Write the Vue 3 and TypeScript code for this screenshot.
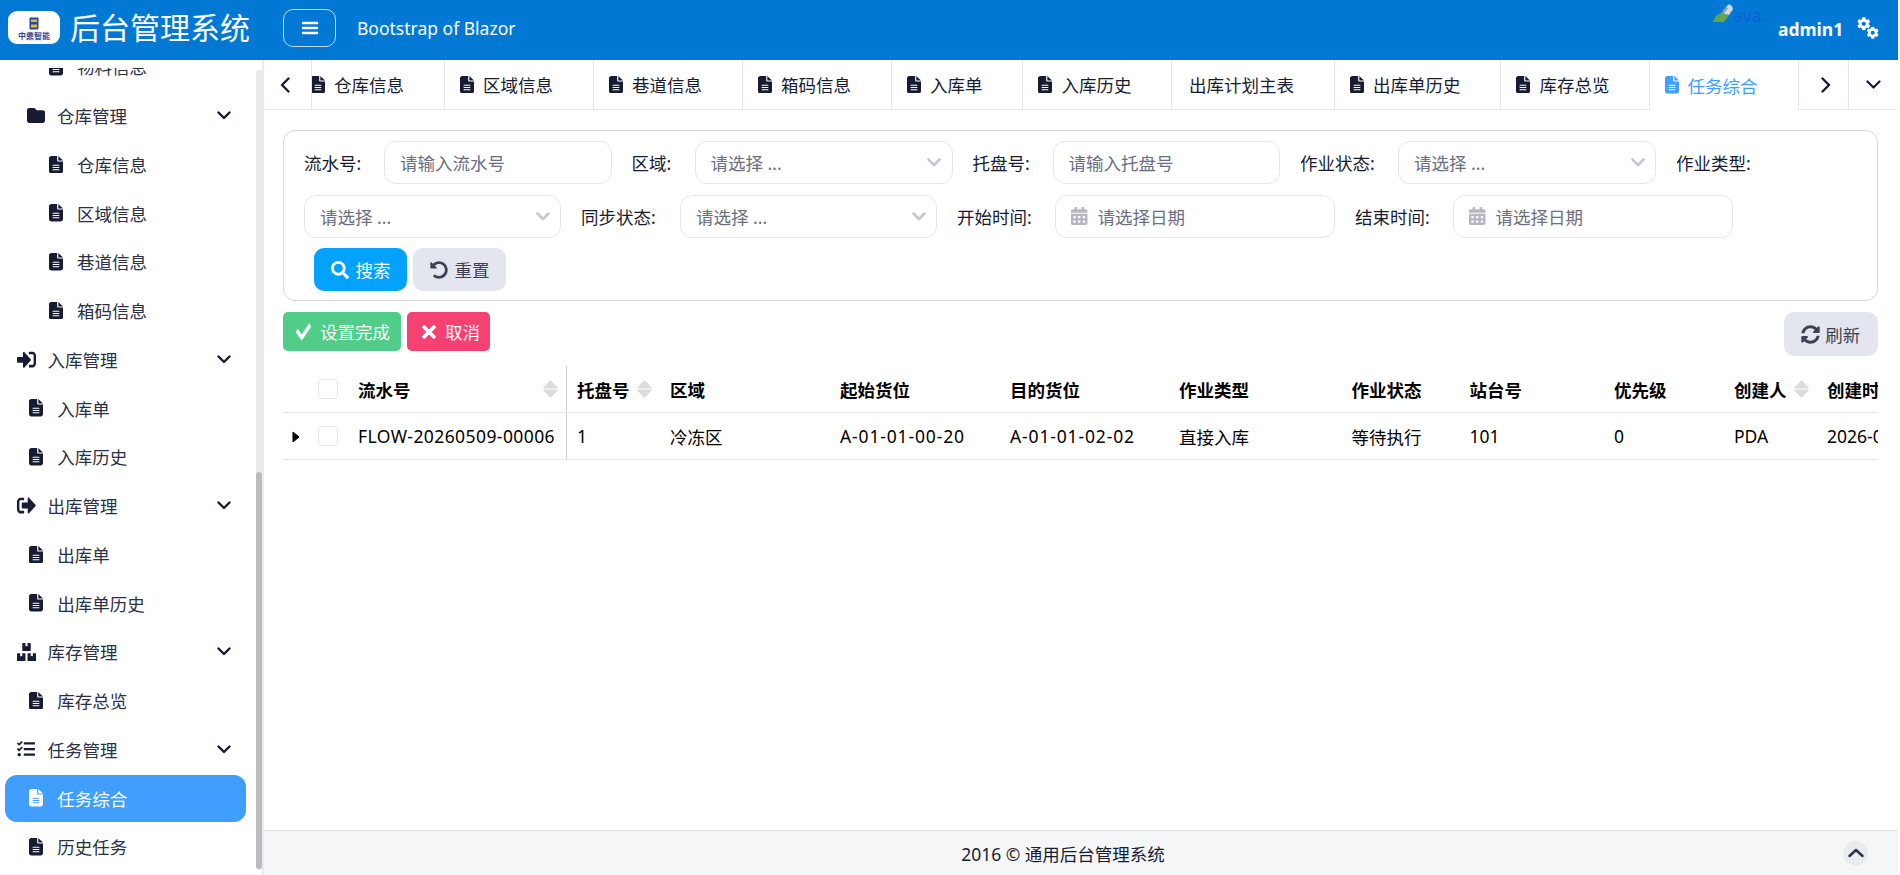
<script setup lang="ts">
import { h } from 'vue'

const icons: Record<string, [string, string]> = {
  file: ['0 0 384 512', 'M64 0C28.7 0 0 28.7 0 64V448c0 35.3 28.7 64 64 64H320c35.3 0 64-28.7 64-64V160H256c-17.7 0-32-14.3-32-32V0H64zM256 0V128H384L256 0zM112 256H272c8.8 0 16 7.2 16 16s-7.2 16-16 16H112c-8.8 0-16-7.2-16-16s7.2-16 16-16zm0 64H272c8.8 0 16 7.2 16 16s-7.2 16-16 16H112c-8.8 0-16-7.2-16-16s7.2-16 16-16zm0 64H272c8.8 0 16 7.2 16 16s-7.2 16-16 16H112c-8.8 0-16-7.2-16-16s7.2-16 16-16z'],
  folder: ['0 0 512 512', 'M64 480H448c35.3 0 64-28.7 64-64V160c0-35.3-28.7-64-64-64H288c-10.1 0-19.6-4.7-25.6-12.8L243.2 57.6C231.1 41.5 212.1 32 192 32H64C28.7 32 0 60.7 0 96V416c0 35.3 28.7 64 64 64z'],
  signIn: ['0 0 512 512', 'M416 448h-84c-6.6 0-12-5.4-12-12v-40c0-6.6 5.4-12 12-12h84c17.7 0 32-14.3 32-32V160c0-17.7-14.3-32-32-32h-84c-6.6 0-12-5.4-12-12V76c0-6.6 5.4-12 12-12h84c53 0 96 43 96 96v192c0 53-43 96-96 96zm-47-201L201 79c-15-15-41-4.5-41 17v96H24c-13.3 0-24 10.7-24 24v96c0 13.3 10.7 24 24 24h136v96c0 21.5 26 32 41 17l168-168c9.3-9.4 9.3-24.6 0-34z'],
  signOut: ['0 0 512 512', 'M497 273L329 441c-15 15-41 4.5-41-17v-96H152c-13.3 0-24-10.7-24-24v-96c0-13.3 10.7-24 24-24h136V88c0-21.4 25.9-32 41-17l168 168c9.3 9.4 9.3 24.6 0 34zM192 436v-40c0-6.6-5.4-12-12-12H96c-17.7 0-32-14.3-32-32V160c0-17.7 14.3-32 32-32h84c6.6 0 12-5.4 12-12V76c0-6.6-5.4-12-12-12H96c-53 0-96 43-96 96v192c0 53 43 96 96 96h84c6.6 0 12-5.4 12-12z'],
  boxes: ['0 0 576 512', 'M560 288h-80v96l-32-21.3-32 21.3v-96h-80c-8.8 0-16 7.2-16 16v192c0 8.8 7.2 16 16 16h224c8.8 0 16-7.2 16-16V304c0-8.8-7.2-16-16-16zm-384-64h224c8.8 0 16-7.2 16-16V16c0-8.8-7.2-16-16-16h-80v96l-32-21.3L256 96V0h-80c-8.8 0-16 7.2-16 16v192c0 8.8 7.2 16 16 16zm64 64h-80v96l-32-21.3L96 384v-96H16c-8.8 0-16 7.2-16 16v192c0 8.8 7.2 16 16 16h224c8.8 0 16-7.2 16-16V304c0-8.8-7.2-16-16-16z'],
  tasks: ['0 0 512 512', 'M139.61 35.5a12 12 0 0 0-17 0L58.93 98.81l-22.7-22.12a12 12 0 0 0-17 0L3.53 92.41a12 12 0 0 0 0 17l47.59 47.4a12.78 12.78 0 0 0 17.61 0l15.59-15.62L156.52 69a12.09 12.09 0 0 0 .09-17zm0 159.19a12 12 0 0 0-17 0l-63.68 63.72-22.7-22.1a12 12 0 0 0-17 0L3.53 252a12 12 0 0 0 0 17L51 316.5a12.77 12.77 0 0 0 17.6 0l15.7-15.69 72.2-72.22a12 12 0 0 0 .09-16.9zM64 368c-26.49 0-48.59 21.5-48.59 48S37.53 464 64 464a48 48 0 0 0 0-96zm432 16H208a16 16 0 0 0-16 16v32a16 16 0 0 0 16 16h288a16 16 0 0 0 16-16v-32a16 16 0 0 0-16-16zm0-320H208a16 16 0 0 0-16 16v32a16 16 0 0 0 16 16h288a16 16 0 0 0 16-16V80a16 16 0 0 0-16-16zm0 160H208a16 16 0 0 0-16 16v32a16 16 0 0 0 16 16h288a16 16 0 0 0 16-16v-32a16 16 0 0 0-16-16z'],
  search: ['0 0 512 512', 'M505 442.7L405.3 343c-4.5-4.5-10.6-7-17-7H372c27.6-35.3 44-79.7 44-128C416 93.1 322.9 0 208 0S0 93.1 0 208s93.1 208 208 208c48.3 0 92.7-16.4 128-44v16.3c0 6.4 2.5 12.5 7 17l99.7 99.7c9.4 9.4 24.6 9.4 33.9 0l28.3-28.3c9.4-9.4 9.4-24.6.1-34zM208 336c-70.7 0-128-57.2-128-128 0-70.7 57.2-128 128-128 70.7 0 128 57.2 128 128 0 70.7-57.2 128-128 128z'],
  undo: ['0 0 512 512', 'M255.545 8c-66.269.119-126.438 26.233-170.86 68.685L48.971 40.971C33.851 25.851 8 36.559 8 57.941V192c0 13.255 10.745 24 24 24h134.059c21.382 0 32.09-25.851 16.971-40.971l-41.75-41.75c30.864-28.899 70.801-44.907 113.23-45.273 92.398-.798 170.283 73.977 169.484 169.442C423.236 348.009 349.816 424 256 424c-41.127 0-79.997-14.678-110.63-41.556-4.743-4.161-11.906-3.908-16.368.553L89.34 422.659c-4.872 4.872-4.631 12.815.482 17.433C133.798 479.813 192.074 504 256 504c136.966 0 247.999-111.033 248-247.998C504.001 119.193 392.354 7.755 255.545 8z'],
  check: ['0 0 512 512', 'M173.898 439.404l-166.4-166.4c-9.997-9.997-9.997-26.206 0-36.204l36.203-36.204c9.997-9.998 26.207-9.998 36.204 0L192 312.69 432.095 72.596c9.997-9.997 26.207-9.997 36.204 0l36.203 36.204c9.997 9.997 9.997 26.206 0 36.204l-294.4 294.401c-9.998 9.997-26.207 9.997-36.204-.001z'],
  times: ['0 0 352 512', 'M242.72 256l100.07-100.07c12.28-12.28 12.28-32.19 0-44.48l-22.24-22.24c-12.28-12.28-32.19-12.28-44.48 0L176 189.28 75.93 89.21c-12.28-12.28-32.19-12.28-44.48 0L9.21 111.45c-12.28 12.28-12.28 32.19 0 44.48L109.28 256 9.21 356.07c-12.28 12.28-12.28 32.19 0 44.48l22.24 22.24c12.28 12.28 32.2 12.28 44.48 0L176 322.72l100.07 100.07c12.28 12.28 32.2 12.28 44.48 0l22.24-22.24c12.28-12.28 12.28-32.19 0-44.48L242.72 256z'],
  sync: ['0 0 512 512', 'M370.72 133.28C339.458 104.008 298.888 87.962 255.848 88c-77.458.068-144.328 53.178-162.791 126.85-1.344 5.363-6.122 9.15-11.651 9.15H24.103c-7.498 0-13.194-6.807-11.807-14.176C33.933 94.924 134.813 8 256 8c66.448 0 126.791 26.136 171.315 68.685L463.03 40.97C478.149 25.851 504 36.559 504 57.941V192c0 13.255-10.745 24-24 24H345.941c-21.382 0-32.09-25.851-16.971-40.971l41.75-41.749zM32 296h134.059c21.382 0 32.09 25.851 16.971 40.971l-41.75 41.75c31.262 29.273 71.835 45.319 114.876 45.28 77.418-.07 144.315-53.144 162.787-126.849 1.344-5.363 6.122-9.15 11.651-9.15h57.304c7.498 0 13.194 6.807 11.807 14.176C478.067 417.076 377.187 504 256 504c-66.448 0-126.791-26.136-171.315-68.685L48.97 471.03C33.851 486.149 8 475.441 8 454.059V320c0-13.255 10.745-24 24-24z'],
  calendar: ['0 0 448 512', 'M0 464c0 26.5 21.5 48 48 48h352c26.5 0 48-21.5 48-48V192H0v272zm320-196c0-6.6 5.4-12 12-12h40c6.6 0 12 5.4 12 12v40c0 6.6-5.4 12-12 12h-40c-6.6 0-12-5.4-12-12v-40zm0 128c0-6.6 5.4-12 12-12h40c6.6 0 12 5.4 12 12v40c0 6.6-5.4 12-12 12h-40c-6.6 0-12-5.4-12-12v-40zM192 268c0-6.6 5.4-12 12-12h40c6.6 0 12 5.4 12 12v40c0 6.6-5.4 12-12 12h-40c-6.6 0-12-5.4-12-12v-40zm0 128c0-6.6 5.4-12 12-12h40c6.6 0 12 5.4 12 12v40c0 6.6-5.4 12-12 12h-40c-6.6 0-12-5.4-12-12v-40zM64 268c0-6.6 5.4-12 12-12h40c6.6 0 12 5.4 12 12v40c0 6.6-5.4 12-12 12H76c-6.6 0-12-5.4-12-12v-40zm0 128c0-6.6 5.4-12 12-12h40c6.6 0 12 5.4 12 12v40c0 6.6-5.4 12-12 12H76c-6.6 0-12-5.4-12-12v-40zM400 64h-48V16c0-8.8-7.2-16-16-16h-32c-8.8 0-16 7.2-16 16v48H160V16c0-8.8-7.2-16-16-16h-32c-8.8 0-16 7.2-16 16v48H48C21.5 64 0 85.5 0 112v48h448v-48c0-26.5-21.5-48-48-48z'],
  cog: ['0 0 512 512', 'M487.4 315.7l-42.6-24.6c4.3-23.2 4.3-47 0-70.2l42.6-24.6c4.9-2.8 7.1-8.6 5.5-14-11.1-35.6-30-67.8-54.7-94.6-3.8-4.1-10-5.1-14.8-2.3L380.8 110c-17.9-15.4-38.5-27.3-60.8-35.1V25.8c0-5.6-3.9-10.5-9.4-11.7-36.7-8.2-74.3-7.8-109.2 0-5.5 1.2-9.4 6.1-9.4 11.7V75c-22.2 7.9-42.8 19.8-60.8 35.1L88.7 85.5c-4.9-2.8-11-1.9-14.8 2.3-24.7 26.7-43.6 58.9-54.7 94.6-1.7 5.4.6 11.2 5.5 14L67.3 221c-4.3 23.2-4.3 47 0 70.2l-42.6 24.6c-4.9 2.8-7.1 8.6-5.5 14 11.1 35.6 30 67.8 54.7 94.6 3.8 4.1 10 5.1 14.8 2.3l42.6-24.6c17.9 15.4 38.5 27.3 60.8 35.1v49.2c0 5.6 3.9 10.5 9.4 11.7 36.7 8.2 74.3 7.8 109.2 0 5.5-1.2 9.4-6.1 9.4-11.7v-49.2c22.2-7.9 42.8-19.8 60.8-35.1l42.6 24.6c4.9 2.8 11 1.9 14.8-2.3 24.7-26.7 43.6-58.9 54.7-94.6 1.5-5.5-.7-11.3-5.6-14.1zM256 336c-44.1 0-80-35.9-80-80s35.9-80 80-80 80 35.9 80 80-35.9 80-80 80z']
}

// font-awesome style glyph, fill follows currentColor
const Ico = (props: { name: string }) => {
  const [box, d] = icons[props.name]
  return h('svg', { viewBox: box, fill: 'currentColor', preserveAspectRatio: 'none' }, [h('path', { d })])
}
Ico.props = ['name']

type MenuRow = { text: string; icon: string; level: 'group' | 'sub' | 'leaf' | 'deep'; active?: boolean }

const menu: MenuRow[] = [
  { text: '物料信息', icon: 'file', level: 'deep' },
  { text: '仓库管理', icon: 'folder', level: 'sub' },
  { text: '仓库信息', icon: 'file', level: 'deep' },
  { text: '区域信息', icon: 'file', level: 'deep' },
  { text: '巷道信息', icon: 'file', level: 'deep' },
  { text: '箱码信息', icon: 'file', level: 'deep' },
  { text: '入库管理', icon: 'signIn', level: 'group' },
  { text: '入库单', icon: 'file', level: 'leaf' },
  { text: '入库历史', icon: 'file', level: 'leaf' },
  { text: '出库管理', icon: 'signOut', level: 'group' },
  { text: '出库单', icon: 'file', level: 'leaf' },
  { text: '出库单历史', icon: 'file', level: 'leaf' },
  { text: '库存管理', icon: 'boxes', level: 'group' },
  { text: '库存总览', icon: 'file', level: 'leaf' },
  { text: '任务管理', icon: 'tasks', level: 'group' },
  { text: '任务综合', icon: 'file', level: 'leaf', active: true },
  { text: '历史任务', icon: 'file', level: 'leaf' }
]

const tabs = [
  { text: '仓库信息', icon: true },
  { text: '区域信息', icon: true },
  { text: '巷道信息', icon: true },
  { text: '箱码信息', icon: true },
  { text: '入库单', icon: true },
  { text: '入库历史', icon: true },
  { text: '出库计划主表', icon: false },
  { text: '出库单历史', icon: true },
  { text: '库存总览', icon: true },
  { text: '任务综合', icon: true, active: true }
]

type Field = { label: string; width: number; kind: 'input' | 'select' | 'date'; hint: string; field: number }

const fields: Field[] = [
  { label: '流水号:', width: 80, kind: 'input', hint: '请输入流水号', field: 227.5 },
  { label: '区域:', width: 63, kind: 'select', hint: '请选择 ...', field: 258 },
  { label: '托盘号:', width: 80, kind: 'input', hint: '请输入托盘号', field: 227.5 },
  { label: '作业状态:', width: 98, kind: 'select', hint: '请选择 ...', field: 258 },
  { label: '作业类型:', width: 98, kind: 'select', hint: '请选择 ...', field: 257 },
  { label: '同步状态:', width: 99, kind: 'select', hint: '请选择 ...', field: 257 },
  { label: '开始时间:', width: 98, kind: 'date', hint: '请选择日期', field: 280 },
  { label: '结束时间:', width: 98, kind: 'date', hint: '请选择日期', field: 280 }
]

const columns = [
  { text: '流水号', width: 218.5, sort: true, fixed: true, cls: 'flow' },
  { text: '托盘号', width: 93.5, sort: true },
  { text: '区域', width: 170 },
  { text: '起始货位', width: 170, cls: 'code' },
  { text: '目的货位', width: 169, cls: 'code' },
  { text: '作业类型', width: 172.5 },
  { text: '作业状态', width: 118 },
  { text: '站台号', width: 144.5 },
  { text: '优先级', width: 120 },
  { text: '创建人', width: 93, sort: true },
  { text: '创建时间', width: 200 }
]

const row = ['FLOW-20260509-00006', '1', '冷冻区', 'A-01-01-00-20', 'A-01-01-02-02', '直接入库', '等待执行', '101', '0', 'PDA', '2026-05-09 10:21:36']
</script>

<template>
  <div class="layout">
    <header class="topbar">
      <div class="logo">
        <svg class="logo-mark" viewBox="0 0 20 26">
          <rect x="1" y="1" width="18" height="24" rx="2" fill="#1f4e9c" />
          <rect x="4" y="5" width="12" height="5" fill="#f0b429" />
          <rect x="4" y="15" width="12" height="6" fill="#f0b429" />
        </svg>
        <span class="logo-text">中鼎智能</span>
      </div>
      <span class="app-title">后台管理系统</span>
      <button class="menu-toggle">
        <svg viewBox="0 0 18 14" width="18" height="14" fill="none" stroke="#fff" stroke-width="2.6" stroke-linecap="round">
          <path d="M2 2h14M2 7h14M2 12h14" />
        </svg>
      </button>
      <span class="app-sub">Bootstrap of Blazor</span>
      <div class="user">
        <div class="avatar">
          <svg viewBox="0 0 20 18" width="20" height="18">
            <path d="M8 10 13 3l3-3 3 2 1 3-4 6z" fill="#cfd8de" />
            <path d="M13 3 8 10l2 1 5-7z" fill="#8f9ba3" />
            <path d="M0 18 3 12l5-3 8 2-5 7z" fill="#5fa84a" />
          </svg>
          <span>ava.</span>
        </div>
        <span class="user-name">admin1</span>
        <svg class="gears" viewBox="0 0 22 22" width="22" height="22" fill="#fff">
          <svg x="0" y="0" width="13.5" height="13.5" viewBox="0 0 512 512"><path :d="icons.cog[1]" /></svg>
          <svg x="9.5" y="9.5" width="12.5" height="12.5" viewBox="0 0 512 512"><path :d="icons.cog[1]" /></svg>
        </svg>
      </div>
    </header>

    <aside class="sidebar">
      <div class="menu-scroll">
        <ul class="menu">
          <li v-for="item in menu" :key="item.text" class="menu-row" :class="[item.level, { active: item.active }]">
            <span class="menu-icon"><Ico :name="item.icon" :class="'ico-' + item.icon" /></span>
            <span>{{ item.text }}</span>
            <svg v-if="item.level === 'group' || item.level === 'sub'" class="menu-arrow" viewBox="0 0 14 9" fill="none" stroke="#181c32" stroke-width="2.4" stroke-linecap="round" stroke-linejoin="round">
              <path d="M1.5 1.5 7 7l5.5-5.5" />
            </svg>
          </li>
        </ul>
      </div>
      <div class="scroll-track"><div class="scroll-thumb"></div></div>
    </aside>

    <main class="main">
      <nav class="tabstrip">
        <button class="tab-btn left">
          <svg viewBox="0 0 10 16" width="10" height="16" fill="none" stroke="#181c32" stroke-width="2.4" stroke-linecap="round" stroke-linejoin="round"><path d="M8.5 1.5 2 8l6.5 6.5" /></svg>
        </button>
        <div class="tab-list">
          <div v-for="t in tabs" :key="t.text" class="tab" :class="{ active: t.active, plain: !t.icon }">
            <Ico v-if="t.icon" name="file" class="tab-icon" />
            <span>{{ t.text }}</span>
          </div>
        </div>
        <button class="tab-btn next">
          <svg viewBox="0 0 10 16" width="10" height="16" fill="none" stroke="#181c32" stroke-width="2.4" stroke-linecap="round" stroke-linejoin="round"><path d="M1.5 1.5 8 8l-6.5 6.5" /></svg>
        </button>
        <button class="tab-btn">
          <svg viewBox="0 0 15 9" width="15" height="9" fill="none" stroke="#181c32" stroke-width="2.2" stroke-linecap="round" stroke-linejoin="round"><path d="M1.5 1.5 7.5 7.5l6-6" /></svg>
        </button>
      </nav>

      <section class="content">
        <form class="search-card" @submit.prevent>
          <template v-for="f in fields" :key="f.label">
            <label class="field-label" :style="{ width: f.width + 'px' }">{{ f.label }}</label>
            <div class="control" :style="{ width: f.field + 'px' }">
              <Ico v-if="f.kind === 'date'" name="calendar" class="date-icon" />
              <span>{{ f.hint }}</span>
              <svg v-if="f.kind === 'select'" class="select-arrow" viewBox="0 0 14 9" fill="none" stroke="#c4c6d2" stroke-width="2.6" stroke-linecap="round" stroke-linejoin="round"><path d="M1.5 1.5 7 7l5.5-5.5" /></svg>
            </div>
          </template>
          <div class="search-actions">
            <button class="btn btn-search"><Ico name="search" class="btn-icon" />搜索</button>
            <button class="btn btn-reset"><Ico name="undo" class="btn-icon" />重置</button>
          </div>
        </form>

        <div class="toolbar">
          <button class="act act-ok"><Ico name="check" class="act-icon" />设置完成</button>
          <button class="act act-cancel"><Ico name="times" class="act-icon x" />取消</button>
          <button class="refresh"><Ico name="sync" class="refresh-icon" />刷新</button>
        </div>

        <div class="table-wrap">
          <table class="grid">
            <colgroup>
              <col style="width: 25px" />
              <col style="width: 40px" />
              <col v-for="c in columns" :key="c.text" :style="{ width: c.width + 'px' }" />
            </colgroup>
            <thead>
              <tr>
                <th></th>
                <th class="cell-check"><span class="checkbox"></span></th>
                <th v-for="c in columns" :key="c.text" :class="{ fixed: c.fixed }">
                  <div class="th-inner">
                    <span>{{ c.text }}</span>
                    <svg v-if="c.sort" class="sorter" viewBox="0 0 15 18" width="15" height="18" fill="#dcdcdc">
                      <path d="M7.5 0.5 14.5 8H0.5z" stroke="#dcdcdc" stroke-linejoin="round" />
                      <path d="M0.5 10H14.5L7.5 17.5z" stroke="#dcdcdc" stroke-linejoin="round" />
                    </svg>
                  </div>
                </th>
              </tr>
            </thead>
            <tbody>
              <tr>
                <td class="cell-expand">
                  <svg viewBox="0 0 8 12" width="8" height="12" fill="#000" stroke="#000" stroke-linejoin="round"><path d="M1 1 7 6 1 11z" /></svg>
                </td>
                <td class="cell-check"><span class="checkbox"></span></td>
                <td v-for="(val, i) in row" :key="i" :class="[columns[i].cls, { fixed: columns[i].fixed }]">{{ val }}</td>
              </tr>
            </tbody>
          </table>
        </div>
      </section>

      <footer class="footer">
        <span class="footer-text">2016 © 通用后台管理系统</span>
        <button class="to-top">
          <svg viewBox="0 0 16 10" width="16" height="10" fill="none" stroke="#2b3046" stroke-width="2.4" stroke-linecap="round" stroke-linejoin="round"><path d="M1.5 8 8 2l6.5 6" /></svg>
        </button>
      </footer>
    </main>
  </div>
</template>

<style scoped>
.layout {
  width: 1898px;
  height: 875px;
  display: grid;
  grid-template-columns: 264px 1fr;
  grid-template-rows: 60px 815px;
  font-family: "Noto Sans", "Noto Sans CJK SC", sans-serif;
  font-size: 17.5px;
  color: #181c32;
  overflow: hidden;
}

button {
  font: inherit;
  border: 0;
  padding: 0;
  background: none;
  cursor: pointer;
}

.topbar {
  grid-column: 1 / 3;
  background: #0278d5;
  display: flex;
  align-items: center;
  color: #fff;
  padding-left: 8px;
}

.logo {
  width: 52px;
  height: 33px;
  margin-top: -5px;
  background: #fff;
  border-radius: 9px;
  display: flex;
  flex-direction: column;
  align-items: center;
  padding-top: 6px;
  box-sizing: border-box;
}

.logo-mark {
  width: 10px;
  height: 13px;
}

.logo-text {
  font-size: 8px;
  line-height: 10px;
  font-weight: 700;
  color: #1f4e9c;
  white-space: nowrap;
  margin-top: 1px;
}

.app-title {
  font-size: 30px;
  line-height: 40px;
  margin: -4px 0 0 10px;
  width: 213px;
}

.menu-toggle {
  width: 53px;
  height: 38px;
  margin-top: -4px;
  border: 1px solid rgba(255, 255, 255, 0.75);
  border-radius: 10px;
  display: flex;
  align-items: center;
  justify-content: center;
}

.app-sub {
  margin: -4px 0 0 21px;
  font-size: 17.5px;
}

.user {
  margin-left: auto;
  height: 100%;
  display: flex;
  align-items: flex-start;
}

.avatar {
  display: flex;
  align-items: flex-start;
  padding-top: 4px;
  width: 65px;
  color: #0b62d6;
  line-height: 22px;
}

.user-name {
  font-weight: 700;
  line-height: 58px;
  width: 79px;
}

.gears {
  margin: 17px 19px 0 0;
}

.sidebar {
  position: relative;
  border-right: 2px solid #e9ebf3;
  padding-top: 8px;
  box-sizing: border-box;
  background: #fff;
  min-height: 0;
}

.menu-scroll {
  height: 100%;
  overflow: hidden;
}

.menu {
  list-style: none;
  margin: -25.5px 0 0;
  padding: 0;
  display: flex;
  flex-direction: column;
}

.menu-row {
  display: flex;
  align-items: center;
  flex: none;
  height: 46.75px;
  margin: 1px 16px 1px 5px;
  border-radius: 12px;
  color: #2b3046;
  white-space: nowrap;
}

.menu-row.group { padding-left: 12px; }
.menu-row.group .menu-icon { width: 30.5px; }
.menu-row.sub { padding-left: 22px; }
.menu-row.sub .menu-icon { width: 30px; }
.menu-row.leaf { padding-left: 24px; }
.menu-row.leaf .menu-icon { width: 28.3px; }
.menu-row.deep { padding-left: 44px; }
.menu-row.deep .menu-icon { width: 28px; }

.menu-icon {
  display: flex;
  align-items: center;
  flex: none;
  color: #181c32;
}

.menu-icon svg {
  width: 14px;
  height: 17.5px;
}

.menu-icon .ico-folder { width: 18px; height: 17px; }
.menu-icon .ico-signIn,
.menu-icon .ico-signOut { width: 19px; height: 21px; }
.menu-icon .ico-boxes { width: 19px; height: 18px; }
.menu-icon .ico-tasks { width: 18px; height: 18px; }

.menu-row.active {
  background: #409eff;
  color: #fff;
}

.menu-row.active .menu-icon {
  color: #fff;
}

.menu-arrow {
  width: 14px;
  height: 9px;
  margin-left: auto;
  margin-right: 15px;
}

.scroll-track {
  position: absolute;
  left: 256px;
  top: 10px;
  width: 6px;
  height: 800px;
  background: #e9e9e9;
  border-radius: 3px;
}

.scroll-thumb {
  position: absolute;
  left: 0;
  right: 0;
  top: 402px;
  bottom: 1px;
  background: #bbbbbb;
  border-radius: 3px;
}

.main {
  display: flex;
  flex-direction: column;
  min-width: 0;
  background: #fff;
}

.tabstrip {
  height: 50px;
  display: flex;
  flex: none;
}

.tab-list {
  flex: 1;
  min-width: 0;
  display: flex;
  overflow: hidden;
}

.tab-btn {
  width: 50px;
  flex: none;
  display: flex;
  align-items: center;
  justify-content: center;
  box-sizing: border-box;
  border-left: 1px solid #e4e6ef;
  border-bottom: 1px solid #e4e6ef;
}

.tab-btn.next {
  padding-left: 4px;
}

.tab-btn.left {
  width: 48px;
  border-left: 0;
  border-right: 1px solid #e4e6ef;
  padding-right: 6px;
  justify-content: center;
}

.tab {
  flex: none;
  display: flex;
  align-items: center;
  box-sizing: border-box;
  padding: 0 39.5px 0 15px;
  border-right: 1px solid #e4e6ef;
  border-bottom: 1px solid #e4e6ef;
  white-space: nowrap;
}

.tab:first-child {
  margin-left: -16.5px;
}

.tab.plain {
  padding-left: 17px;
}

.tab-icon {
  width: 14px;
  height: 17.5px;
  margin-right: 9.5px;
  flex: none;
}

.tab.active {
  color: #409eff;
  border-bottom: 0;
  border-right: 0;
  padding-right: 39.5px;
}

.tab.active .tab-icon {
  margin-right: 8.5px;
}

.content {
  flex: 1;
  min-height: 0;
  padding: 20px 20.5px 0 19px;
}

.search-card {
  border: 1px solid #d6d6d6;
  border-radius: 12px;
  padding: 10px 20px 9px;
  display: flex;
  flex-wrap: wrap;
  align-items: center;
  column-gap: 20px;
  row-gap: 11.5px;
}

.field-label {
  margin-right: -20px;
  color: #181c32;
  white-space: nowrap;
}

.control {
  height: 42.5px;
  box-sizing: border-box;
  border: 1px solid #e4e6ef;
  border-radius: 12px;
  display: flex;
  align-items: center;
  padding: 0 15px;
  color: #6b6f82;
  position: relative;
  flex: none;
}

.date-icon {
  width: 16.5px;
  height: 18px;
  margin-right: 10px;
  color: #b5b5c3;
}

.select-arrow {
  position: absolute;
  right: 10.5px;
  top: 50%;
  width: 14px;
  height: 9px;
  margin-top: -4px;
}

.search-actions {
  flex-basis: 100%;
  display: flex;
  gap: 6px;
  padding-left: 10px;
  margin-top: -1px;
}

.btn {
  width: 93px;
  height: 43px;
  border-radius: 10px;
  display: flex;
  align-items: center;
  justify-content: center;
}

.btn-search {
  background: #03a2ff;
  color: #fff;
}

.btn-reset {
  background: #e4e6ef;
  color: #3f4254;
}

.btn-icon {
  width: 18px;
  height: 18px;
  margin-right: 7px;
}

.toolbar {
  display: flex;
  align-items: flex-start;
  gap: 6px;
  margin-top: 11px;
  height: 54px;
}

.act {
  height: 39px;
  padding: 0 11px 0 13px;
  border-radius: 5px;
  color: #fff;
  display: flex;
  align-items: center;
}

.act-ok {
  background: #50cd89;
}

.act-cancel {
  background: #f64272;
  padding: 0 10px 0 15px;
}

.act-icon {
  width: 15px;
  height: 22px;
  margin-right: 9px;
}

.act-icon.x {
  width: 14px;
  height: 20px;
}

.refresh {
  margin-left: auto;
  width: 93.5px;
  height: 44px;
  border-radius: 10px;
  background: #e4e6ef;
  color: #3f4254;
  display: flex;
  align-items: center;
  justify-content: center;
}

.refresh-icon {
  width: 19px;
  height: 19px;
  margin-right: 5px;
}

.table-wrap {
  overflow: hidden;
}

.grid {
  table-layout: fixed;
  border-collapse: collapse;
  width: 1734px;
  color: #000;
}

.grid th,
.grid td {
  padding: 0 8px 0 10px;
  border-bottom: 1px solid #e4e6ef;
  text-align: left;
  white-space: nowrap;
  overflow: hidden;
}

.grid th {
  height: 46px;
  font-weight: 700;
}

.grid td {
  height: 46px;
}

.grid td.flow {
  letter-spacing: 0.42px;
}

.grid td.code {
  letter-spacing: 0.85px;
}

.grid .fixed {
  border-right: 1px solid #cfcfcf;
  box-shadow: 1px 0 2px rgba(0, 0, 0, 0.06);
}

.th-inner {
  display: flex;
  align-items: center;
  justify-content: space-between;
}

.sorter {
  flex: none;
}

.grid .cell-expand {
  padding: 0 0 0 9px;
}

.grid .cell-check {
  padding: 0 0 0 10px;
}

.checkbox {
  display: block;
  width: 20px;
  height: 20px;
  box-sizing: border-box;
  border: 1px solid #e4e6ef;
  border-radius: 4px;
  background: #fff;
}

.footer {
  height: 45px;
  flex: none;
  box-sizing: border-box;
  background: #f5f6f8;
  border-top: 1px solid #dde3ea;
  display: flex;
  align-items: center;
  padding: 0 30px 0 19px;
}

.footer-text {
  flex: 1;
  text-align: center;
  color: #181c32;
}

.to-top {
  width: 25px;
  height: 25px;
  border-radius: 50%;
  background: #e9ecef;
  display: flex;
  align-items: center;
  justify-content: center;
}
</style>

<style>
html,
body {
  background: #fff;
  overflow: hidden;
}
</style>
